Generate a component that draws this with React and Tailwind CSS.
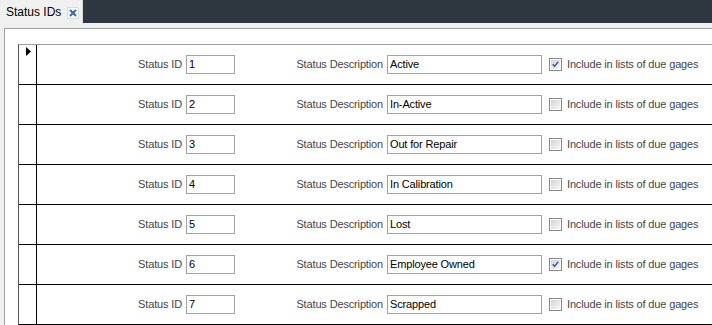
import React from "react";

const rows = [
  { id: "1", desc: "Active", due: true, current: true },
  { id: "2", desc: "In-Active", due: false },
  { id: "3", desc: "Out for Repair", due: false },
  { id: "4", desc: "In Calibration", due: false },
  { id: "5", desc: "Lost", due: false },
  { id: "6", desc: "Employee Owned", due: true },
  { id: "7", desc: "Scrapped", due: false },
];

const CheckBox = ({ checked }) => (
  <svg width="13" height="13" viewBox="0 0 13 13" className="shrink-0">
    <defs>
      <linearGradient id="cbg" x1="0" y1="0" x2="1" y2="1">
        <stop offset="0" stopColor="#d4d4d4" />
        <stop offset="1" stopColor="#f6f6f6" />
      </linearGradient>
    </defs>
    <rect x="0.5" y="0.5" width="12" height="12" fill="#fff" stroke="#8a8a8a" />
    <rect x="2" y="2" width="9" height="9" fill="url(#cbg)" />
    {checked && (
      <path d="M3.8 6.2 L5.6 8.4 L9.2 3.8" fill="none" stroke="#2f5fa8" strokeWidth="1.5" />
    )}
  </svg>
);

const Row = ({ row }) => (
  <div className="flex h-[40px] items-center border-b border-black">
    <div className="flex h-full w-[18px] shrink-0 items-start justify-start border-r border-black pl-[7px] pt-[2px]">
      {row.current && (
        <svg width="5" height="9" viewBox="0 0 5 9">
          <path d="M0 0 L5 4.5 L0 9 Z" fill="#000" />
        </svg>
      )}
    </div>
    <div className="w-[145px] shrink-0 text-right text-[#454545]">Status ID</div>
    <div className="ml-[4px] flex h-[19px] w-[49px] shrink-0 items-center border border-[#a3a3a3] bg-white pl-[2px] text-black">
      {row.id}
    </div>
    <div className="w-[148px] shrink-0 text-right text-[#454545]">Status Description</div>
    <div className="ml-[4px] flex h-[19px] w-[155px] shrink-0 items-center border border-[#a3a3a3] bg-white pl-[2px] text-black">
      {row.desc}
    </div>
    <div className="ml-[7px] flex items-center">
      <CheckBox checked={row.due} />
    </div>
    <div className="ml-[5px] whitespace-nowrap text-[#454545]">Include in lists of due gages</div>
  </div>
);

export default function App() {
  return (
    <div
      className="flex h-[325px] w-[712px] flex-col overflow-hidden bg-[#f0f0f0] text-[11px] tracking-[-0.15px]"
      style={{ fontFamily: '"Liberation Sans", Arial, sans-serif' }}
    >
      {/* Tab strip */}
      <div className="flex h-[23px] shrink-0 bg-[#2e3640]">
        <div className="flex w-[83px] items-center border-r border-[#d6d6d6] bg-[#f0f0f0] pl-[6px]">
          <span className="text-[12px] tracking-normal text-black">Status IDs</span>
          <div className="ml-[6px] mt-[2px] flex h-[12px] w-[12px] items-center justify-center border border-[#d8dde4] bg-[#f7f8fa]">
            <svg width="8" height="8" viewBox="0 0 8 8">
              <path d="M1 1 L7 7 M7 1 L1 7" stroke="#3a6aa6" strokeWidth="2" />
            </svg>
          </div>
        </div>
      </div>

      {/* Content panel */}
      <div className="flex flex-1 flex-col pl-[4px] pt-[5px]">
        <div className="flex-1 border-l border-t border-[#a0a0a0] bg-white pl-[13px] pt-[15px]">
          <div className="border-l border-t border-l-[#555] border-t-[#a0a0a0]">
            {rows.map((r) => (
              <Row key={r.id} row={r} />
            ))}
          </div>
        </div>
      </div>
    </div>
  );
}
